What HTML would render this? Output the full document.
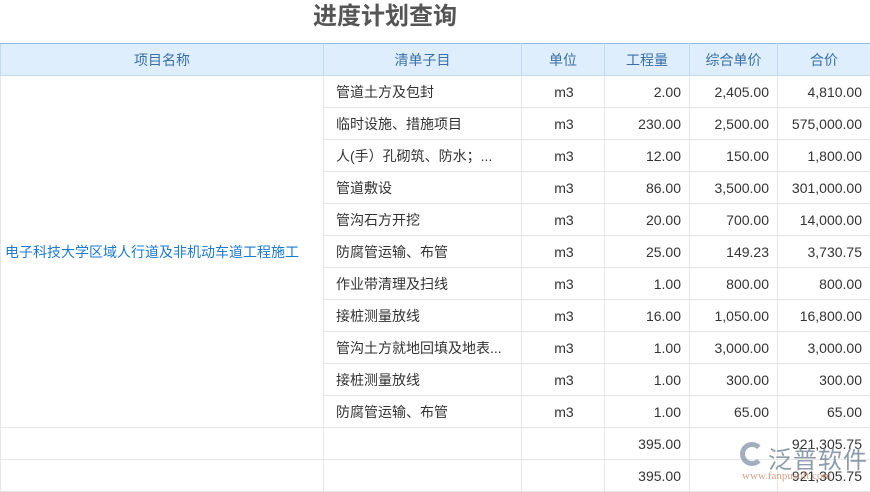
<!DOCTYPE html><html><head><meta charset="utf-8"><style>
body{margin:0;width:870px;height:490px;background:#fff;font-family:"Liberation Sans","Noto Sans CJK SC",sans-serif;position:relative;overflow:hidden}
.t{position:absolute;left:0;width:770px;top:2px;text-align:center;font-size:24px;font-weight:bold;color:#555;line-height:30px}
table{position:absolute;top:43px;left:0;border-collapse:collapse;width:870px;font-size:14px;color:#333;table-layout:fixed}
th{background:#dfeefc;color:#3a6fa8;font-weight:normal;height:30px;padding:0;border:1px solid #c4d8ee;border-top:1px solid #8db8e4;font-size:14px}
td{height:31px;padding:0 10px 0 12px;border:1px solid #e6e6e6;white-space:nowrap;overflow:hidden}
tr{height:32px}
.r{text-align:right;padding-right:8px}.c{text-align:center}
.p{color:#1a7ad4;padding:0 4px}
</style></head><body>
<div class="t">进度计划查询</div>
<table>
<colgroup><col style="width:323px"><col style="width:198px"><col style="width:83px"><col style="width:85px"><col style="width:88px"><col style="width:93px"></colgroup>
<tr style="height:32px"><th>项目名称</th><th>清单子目</th><th>单位</th><th>工程量</th><th>综合单价</th><th>合价</th></tr>
<tr><td rowspan="11" class="p">电子科技大学区域人行道及非机动车道工程施工</td><td>管道土方及包封</td><td class="c">m3</td><td class="r">2.00</td><td class="r">2,405.00</td><td class="r">4,810.00</td></tr>
<tr><td>临时设施、措施项目</td><td class="c">m3</td><td class="r">230.00</td><td class="r">2,500.00</td><td class="r">575,000.00</td></tr>
<tr><td>人(手）孔砌筑、防水；...</td><td class="c">m3</td><td class="r">12.00</td><td class="r">150.00</td><td class="r">1,800.00</td></tr>
<tr><td>管道敷设</td><td class="c">m3</td><td class="r">86.00</td><td class="r">3,500.00</td><td class="r">301,000.00</td></tr>
<tr><td>管沟石方开挖</td><td class="c">m3</td><td class="r">20.00</td><td class="r">700.00</td><td class="r">14,000.00</td></tr>
<tr><td>防腐管运输、布管</td><td class="c">m3</td><td class="r">25.00</td><td class="r">149.23</td><td class="r">3,730.75</td></tr>
<tr><td>作业带清理及扫线</td><td class="c">m3</td><td class="r">1.00</td><td class="r">800.00</td><td class="r">800.00</td></tr>
<tr><td>接桩测量放线</td><td class="c">m3</td><td class="r">16.00</td><td class="r">1,050.00</td><td class="r">16,800.00</td></tr>
<tr><td>管沟土方就地回填及地表...</td><td class="c">m3</td><td class="r">1.00</td><td class="r">3,000.00</td><td class="r">3,000.00</td></tr>
<tr><td>接桩测量放线</td><td class="c">m3</td><td class="r">1.00</td><td class="r">300.00</td><td class="r">300.00</td></tr>
<tr><td>防腐管运输、布管</td><td class="c">m3</td><td class="r">1.00</td><td class="r">65.00</td><td class="r">65.00</td></tr>
<tr><td></td><td></td><td></td><td class="r">395.00</td><td></td><td class="r">921,305.75</td></tr>
<tr><td></td><td></td><td></td><td class="r">395.00</td><td></td><td class="r">921,305.75</td></tr>
</table>
<div style="position:absolute;left:740px;top:442px;width:24px;height:24px;border-radius:50%;border:5px solid #8a9aae;border-right-color:transparent;box-sizing:border-box;opacity:.8"></div>
<div style="position:absolute;left:768px;top:440px;font-size:24px;color:#7a8a9e;opacity:.85;letter-spacing:1px">泛普软件</div>
<div style="position:absolute;left:742px;top:470px;font-size:11px;color:#d08a6a;opacity:.8;font-family:'Liberation Serif',serif">www.fanpusoft.com</div>
</body></html>
